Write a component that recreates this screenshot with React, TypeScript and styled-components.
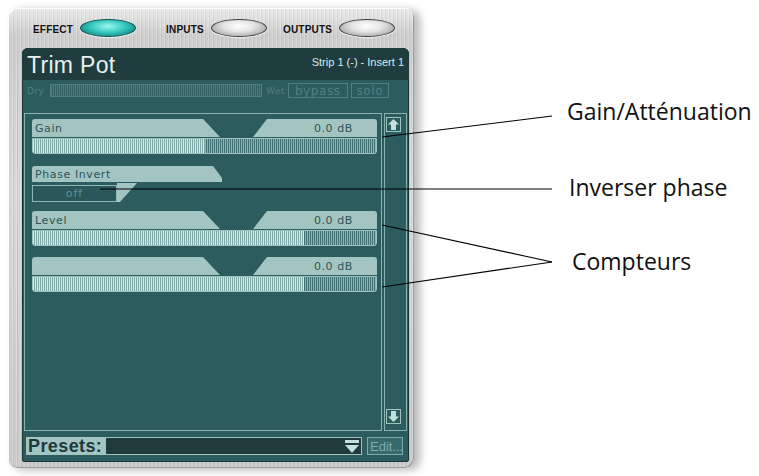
import React from 'react';
import styled, { createGlobalStyle } from 'styled-components';

const GlobalStyle = createGlobalStyle`
  html, body {
    margin: 0;
    padding: 0;
    background: #ffffff;
  }
  body {
    font-family: "Liberation Sans", Arial, sans-serif;
  }
`;

const Page = styled.div`
  position: relative;
  width: 759px;
  height: 476px;
  display: flex;
  align-items: flex-start;
  overflow: hidden;
  background: #ffffff;
`;

const Device = styled.div`
  margin: 8px 0 0 8px;
  width: 406px;
  height: 460px;
  box-sizing: border-box;
  padding: 0 5px 6px 14px;
  border-radius: 9px;
  background:
    repeating-linear-gradient(90deg, rgba(255, 255, 255, 0.18) 0 1px, rgba(0, 0, 0, 0.05) 1px 2px, rgba(255, 255, 255, 0) 2px 4px),
    linear-gradient(180deg, #ececec 0%, #cdcdcd 6%, #d8d8d8 40%, #cacaca 100%);
  box-shadow:
    inset 1px 1px 0 #ffffff,
    inset -1px -1px 0 #9c9c9c,
    6px 2px 8px rgba(0, 0, 0, 0.28);
  display: flex;
  flex-direction: column;
`;

const TabRow = styled.div`
  height: 40px;
  display: flex;
  align-items: center;
  padding-left: 11px;
`;

const TabGroup = styled.div<{ $offset: number }>`
  display: flex;
  align-items: center;
  gap: 7px;
  margin-left: ${(p) => p.$offset}px;
`;

const TabLabel = styled.span`
  font-family: "Liberation Sans", Arial, sans-serif;
  font-weight: 700;
  font-size: 10px;
  letter-spacing: 0.2px;
  color: #111111;
  transform: scaleY(1.15);
`;

const Pill = styled.div<{ $active?: boolean }>`
  width: 56px;
  height: 18px;
  box-sizing: border-box;
  border-radius: 50%;
  border: 1px solid ${(p) => (p.$active ? '#0d4f4c' : '#3e3e3e')};
  background: ${(p) =>
    p.$active
      ? 'radial-gradient(ellipse at 50% 40%, #9ef8f0 0%, #35c8bf 45%, #138a85 80%, #0b5e5b 100%)'
      : 'radial-gradient(ellipse at 50% 38%, #ffffff 0%, #e4e4e4 40%, #a8a8a8 80%, #6e6e6e 100%)'};
  box-shadow: 0 1px 1px rgba(255, 255, 255, 0.8);
`;

const Panel = styled.div`
  flex: 1;
  display: flex;
  flex-direction: column;
  background: #2c5c5e;
  border-radius: 6px 6px 3px 3px;
  box-shadow: inset 0 0 0 1px #1a3536;
  overflow: hidden;
`;

const Header = styled.div`
  height: 32px;
  display: flex;
  justify-content: space-between;
  align-items: flex-start;
  background: #1f3d3f;
  padding: 0 5px 0 5px;
`;

const Title = styled.div`
  font-family: "Liberation Sans", Arial, sans-serif;
  font-size: 23px;
  color: #e8f1ef;
  padding-top: 4px;
  letter-spacing: 0.3px;
`;

const StripInfo = styled.div`
  font-family: "Liberation Sans", Arial, sans-serif;
  font-size: 11px;
  color: #dce9e7;
  padding-top: 8px;
`;

const DimRow = styled.div`
  margin-top: 3px;
  height: 15px;
  display: flex;
  align-items: center;
  padding: 0 3px 0 5px;
  color: #4f8082;
  font-family: "DejaVu Sans", Verdana, sans-serif;
`;

const DimText = styled.span<{ $size?: number }>`
  font-size: ${(p) => p.$size ?? 9}px;
  letter-spacing: 0.4px;
`;

const DimBar = styled.div`
  width: 212px;
  height: 13px;
  box-sizing: border-box;
  margin: 0 4px 0 6px;
  border: 1px solid #4f8082;
  background: repeating-linear-gradient(90deg, #4a7a7c 0 1px, #335f61 1px 2px);
`;

const DimButton = styled.div<{ $w: number }>`
  width: ${(p) => p.$w}px;
  height: 15px;
  box-sizing: border-box;
  margin-left: 3px;
  border: 1px solid #4f8082;
  display: flex;
  align-items: center;
  justify-content: center;
  font-size: 12px;
  letter-spacing: 0.6px;
  line-height: 1;
`;

const Body = styled.div`
  margin-top: 15px;
  height: 318px;
  display: flex;
  gap: 2px;
  padding: 0 2px 0 2px;
`;

const ControlsBox = styled.div`
  flex: 1;
  box-sizing: border-box;
  border: 1px solid #8ab3af;
  padding: 5px 3px 0 7px;
  display: flex;
  flex-direction: column;
`;

const ScrollCol = styled.div`
  width: 23px;
  box-sizing: border-box;
  border: 1px solid #8ab3af;
  display: flex;
  flex-direction: column;
  justify-content: space-between;
  align-items: flex-start;
  padding: 3px 0 6px 1px;
`;

const Control = styled.div<{ $top: number }>`
  margin-top: ${(p) => p.$top}px;
  width: 345px;
  display: flex;
  flex-direction: column;
`;

const LabelRow = styled.div`
  height: 18px;
  display: flex;
  gap: 33px;
`;

const LabelLeft = styled.div`
  width: 188px;
  background: #a3c5c1;
  border-radius: 3px 0 0 0;
  clip-path: polygon(0 0, 171px 0, 100% 100%, 0 100%);
  display: flex;
  align-items: center;
  padding-left: 3px;
  box-sizing: border-box;
`;

const LabelRight = styled.div`
  flex: 1;
  background: #a3c5c1;
  border-radius: 0 3px 0 0;
  clip-path: polygon(14px 0, 100% 0, 100% 100%, 0 100%);
  display: flex;
  align-items: center;
  justify-content: flex-end;
  padding-right: 24px;
`;

const LabelText = styled.span`
  font-family: "DejaVu Sans", Verdana, sans-serif;
  font-size: 11px;
  letter-spacing: 0.6px;
  color: #2e5557;
`;

const Meter = styled.div`
  margin-top: 1px;
  height: 16px;
  box-sizing: border-box;
  border: 1px solid #9fc2be;
  border-radius: 0 0 3px 3px;
  background: repeating-linear-gradient(90deg, #8cb4b0 0 1px, #3f6f70 1px 2px);
  overflow: hidden;
  display: flex;
`;

const MeterFill = styled.div<{ $fill: number }>`
  width: ${(p) => p.$fill}%;
  background: repeating-linear-gradient(90deg, #d4e8e5 0 1px, #7ea9a6 1px 2px);
`;

const PhaseLabel = styled.div`
  width: 190px;
  height: 16px;
  background: #a3c5c1;
  border-radius: 3px 0 0 0;
  clip-path: polygon(0 0, 181px 0, 100% 75%, 100% 100%, 0 100%);
  display: flex;
  align-items: center;
  padding-left: 3px;
  box-sizing: border-box;
`;

const PhaseRow = styled.div`
  display: flex;
  margin-top: 1px;
`;

const OffButton = styled.div`
  margin-top: 2px;
  width: 85px;
  height: 17px;
  box-sizing: border-box;
  border: 1px solid #8fb7b3;
  background: #2a5759;
  display: flex;
  align-items: center;
  justify-content: center;
  font-family: "DejaVu Sans", Verdana, sans-serif;
  font-size: 11px;
  letter-spacing: 1px;
  color: #5f9394;
`;

const Wedge = styled.div`
  width: 20px;
  height: 19px;
  background: #a3c5c1;
  clip-path: polygon(0 0, 100% 0, 15% 100%, 0 100%);
`;

const PresetsRow = styled.div`
  margin-top: 6px;
  height: 18px;
  display: flex;
  padding: 0 6px 0 4px;
`;

const PresetsLabel = styled.div`
  width: 79px;
  background: #a3c5c1;
  color: #1c3a3b;
  font-family: "Liberation Sans", Arial, sans-serif;
  font-weight: 700;
  font-size: 18px;
  letter-spacing: 0.4px;
  display: flex;
  align-items: center;
  padding-left: 2px;
  box-sizing: border-box;
  white-space: nowrap;
  overflow: hidden;
`;

const PresetsField = styled.div`
  flex: 1;
  box-sizing: border-box;
  border: 1px solid #9fc2be;
  background: #213b3c;
  display: flex;
  align-items: center;
  justify-content: flex-end;
  padding-right: 1px;
`;

const EditButton = styled.div`
  margin-left: 5px;
  width: 36px;
  box-sizing: border-box;
  border: 1px solid #7fa9a6;
  background: #376a6c;
  color: #7eaeae;
  font-family: "Liberation Sans", Arial, sans-serif;
  font-size: 13px;
  display: flex;
  align-items: center;
  padding-left: 2px;
  white-space: nowrap;
  overflow: hidden;
`;

const Annotations = styled.div`
  margin-left: 153px;
  display: flex;
  flex-direction: column;
`;

const Note = styled.div<{ $top: number; $indent?: number }>`
  margin-top: ${(p) => p.$top}px;
  margin-left: ${(p) => p.$indent ?? 0}px;
  font-family: "Open Sans", "DejaVu Sans", sans-serif;
  font-weight: 400;
  font-size: 23px;
  line-height: 23px;
  color: #111111;
  white-space: nowrap;
`;

const Leaders = styled.svg`
  position: absolute;
  left: 0;
  top: 0;
  pointer-events: none;
`;

const ArrowButton = ({ down }: { down?: boolean }) => (
  <svg width="15" height="15" viewBox="0 0 15 15">
    <rect x="0.5" y="0.5" width="14" height="14" fill="#2c5c5e" stroke="#9cc4c0" />
    <path
      d="M7.5 2 L13 7.5 L10 7.5 L10 13 L5 13 L5 7.5 L2 7.5 Z"
      fill="#c4e0dc"
      transform={down ? 'rotate(180 7.5 7.5)' : undefined}
    />
  </svg>
);

const DropIcon = () => (
  <svg width="16" height="15" viewBox="0 0 16 15">
    <rect x="1" y="1" width="14" height="3" fill="#c4e0dc" />
    <path d="M1 6 L15 6 L8 14 Z" fill="#c4e0dc" />
  </svg>
);

type SliderProps = { top: number; label?: string; value: string; fill: number };

const Slider = ({ top, label, value, fill }: SliderProps) => (
  <Control $top={top}>
    <LabelRow>
      <LabelLeft>{label && <LabelText>{label}</LabelText>}</LabelLeft>
      <LabelRight>
        <LabelText>{value}</LabelText>
      </LabelRight>
    </LabelRow>
    <Meter>
      <MeterFill $fill={fill} />
    </Meter>
  </Control>
);

const App: React.FC = () => (
  <Page>
    <GlobalStyle />
    <Device>
      <TabRow>
        <TabGroup $offset={0}>
          <TabLabel>EFFECT</TabLabel>
          <Pill $active />
        </TabGroup>
        <TabGroup $offset={30}>
          <TabLabel>INPUTS</TabLabel>
          <Pill />
        </TabGroup>
        <TabGroup $offset={16}>
          <TabLabel>OUTPUTS</TabLabel>
          <Pill />
        </TabGroup>
      </TabRow>
      <Panel>
        <Header>
          <Title>Trim Pot</Title>
          <StripInfo>Strip 1 (-) - Insert 1</StripInfo>
        </Header>
        <DimRow>
          <DimText>Dry</DimText>
          <DimBar />
          <DimText>Wet</DimText>
          <DimButton $w={60}>bypass</DimButton>
          <DimButton $w={38}>solo</DimButton>
        </DimRow>
        <Body>
          <ControlsBox>
            <Slider top={0} label="Gain" value="0.0 dB" fill={50} />
            <Control $top={12}>
              <PhaseLabel>
                <LabelText>Phase Invert</LabelText>
              </PhaseLabel>
              <PhaseRow>
                <OffButton>off</OffButton>
                <Wedge />
              </PhaseRow>
            </Control>
            <Slider top={9} label="Level" value="0.0 dB" fill={79} />
            <Slider top={11} value="0.0 dB" fill={79} />
          </ControlsBox>
          <ScrollCol>
            <ArrowButton />
            <ArrowButton down />
          </ScrollCol>
        </Body>
        <PresetsRow>
          <PresetsLabel>Presets:</PresetsLabel>
          <PresetsField>
            <DropIcon />
          </PresetsField>
          <EditButton>Edit...</EditButton>
        </PresetsRow>
      </Panel>
    </Device>
    <Annotations>
      <Note $top={100}>Gain/Atténuation</Note>
      <Note $top={53} $indent={2}>Inverser phase</Note>
      <Note $top={51} $indent={5}>Compteurs</Note>
    </Annotations>
    <Leaders width="759" height="476" viewBox="0 0 759 476">
      <g stroke="#000000" strokeWidth="1.1" fill="none">
        <line x1="382" y1="137" x2="552" y2="116" />
        <line x1="100" y1="189" x2="552" y2="189" />
        <line x1="382" y1="225" x2="552" y2="262" />
        <line x1="382" y1="287" x2="552" y2="262" />
      </g>
    </Leaders>
  </Page>
);

export default App;
